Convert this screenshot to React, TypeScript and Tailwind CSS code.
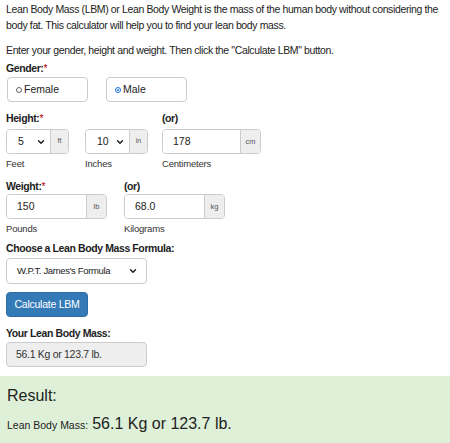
import { ChevronDown } from "lucide-react";

const FONT = "font-['Liberation_Sans',Arial,sans-serif]";

function Label({ children, star }: { children: React.ReactNode; star?: boolean }) {
  return (
    <div className="h-4 whitespace-nowrap text-[10.5px] font-bold leading-4 tracking-[-0.4px] text-[#222]">
      {children}
      {star && <span className="font-normal text-[#b00]">*</span>}
    </div>
  );
}

function Hint({ children }: { children: React.ReactNode }) {
  return <div className="mt-[2px] h-4 text-[9.5px] leading-4 tracking-[-0.2px] text-[#333]">{children}</div>;
}

function SelectAddon({ value, unit }: { value: string; unit: string }) {
  return (
    <div className="flex h-[25px] w-[63px] overflow-hidden rounded-[4px] border border-[#ccc]">
      <div className="flex flex-1 items-center justify-between bg-white pl-[11px] pr-[4px] text-[10.5px] text-[#222]">
        <span>{value}</span>
        <ChevronDown className="h-[10px] w-[10px]" strokeWidth={3.5} />
      </div>
      <div className="flex w-[18px] items-center justify-center border-l border-[#ccc] bg-[#eee] text-[7px] text-[#555]">
        {unit}
      </div>
    </div>
  );
}

function InputAddon({ value, unit, w }: { value: string; unit: string; w: string }) {
  return (
    <div className={`flex h-[25px] ${w} overflow-hidden rounded-[4px] border border-[#ccc]`}>
      <div className="flex flex-1 items-center bg-white pl-[10px] text-[10.5px] text-[#222]">{value}</div>
      <div className="flex w-[20px] items-center justify-center border-l border-[#ccc] bg-[#eee] text-[7.5px] text-[#555]">
        {unit}
      </div>
    </div>
  );
}

export default function App() {
  return (
    <div className={`${FONT} h-[443px] w-[450px] overflow-hidden bg-white text-[10.5px] tracking-[-0.37px] text-[#222]`}>
      <div className="pl-[6px] pr-[2px] pt-[1px]">
        <p className="leading-4">
          Lean Body Mass (LBM) or Lean Body Weight is the mass of the human body without considering the body fat. This
          calculator will help you to find your lean body mass.
        </p>
        <p className="mt-[9px] leading-4">Enter your gender, height and weight. Then click the "Calculate LBM" button.</p>

        <div className="mt-[2px]">
          <Label star>Gender:</Label>
          <div className="mt-[1px] flex gap-[18px] pl-[1px] tracking-normal">
            <div className="flex h-[25px] w-[81px] items-center gap-[2px] rounded-[4px] border border-[#ccc] pl-[8px] text-[10.5px]">
              <span className="h-[6px] w-[6px] rounded-full border border-[#666]" />
              Female
            </div>
            <div className="flex h-[25px] w-[81px] items-center gap-[2px] rounded-[4px] border border-[#ccc] pl-[8px] text-[10.5px]">
              <span className="flex h-[6px] w-[6px] items-center justify-center rounded-full border border-[#1a73e8]">
                <span className="h-[2px] w-[2px] rounded-full bg-[#1a73e8]" />
              </span>
              Male
            </div>
          </div>
        </div>

        <div className="mt-[8px] flex tracking-normal">
          <div className="w-[79px]">
            <Label star>Height:</Label>
            <div className="mt-[3px]">
              <SelectAddon value="5" unit="ft" />
            </div>
            <Hint>Feet</Hint>
          </div>
          <div className="w-[77px]">
            <div className="h-4" />
            <div className="mt-[3px]">
              <SelectAddon value="10" unit="in" />
            </div>
            <Hint>Inches</Hint>
          </div>
          <div>
            <Label>(or)</Label>
            <div className="mt-[3px]">
              <InputAddon value="178" unit="cm" w="w-[99px]" />
            </div>
            <Hint>Centimeters</Hint>
          </div>
        </div>

        <div className="mt-[6px] flex tracking-normal">
          <div className="w-[118px]">
            <Label star>Weight:</Label>
            <InputAddon value="150" unit="lb" w="w-[101px]" />
            <Hint>Pounds</Hint>
          </div>
          <div>
            <Label>(or)</Label>
            <InputAddon value="68.0" unit="kg" w="w-[101px]" />
            <Hint>Kilograms</Hint>
          </div>
        </div>

        <div className="mt-[3px]">
          <Label>Choose a Lean Body Mass Formula:</Label>
          <div className="mt-[2px] flex h-[26px] w-[141px] items-center justify-between whitespace-nowrap rounded-[4px] border border-[#ccc] pl-[10px] pr-[8px] text-[9.5px] tracking-[-0.35px]">
            <span>W.P.T. James's Formula</span>
            <ChevronDown className="h-[10px] w-[10px]" strokeWidth={3.5} />
          </div>
        </div>

        <button className="mt-[8px] flex h-[25px] w-[82px] items-center justify-center whitespace-nowrap rounded-[4px] border border-[#2e6da4] bg-[#337ab7] text-[10.5px] tracking-[-0.25px] text-white">
          Calculate LBM
        </button>

        <div className="mt-[8px]">
          <Label>Your Lean Body Mass:</Label>
          <div className="mt-[1px] flex h-[25px] w-[141px] items-center rounded-[4px] border border-[#ccc] bg-[#eee] pl-[9px] text-[10.5px] tracking-[-0.3px] text-[#333]">
            56.1 Kg or 123.7 lb.
          </div>
        </div>
      </div>

      <div className="mt-[9px] h-[80px] bg-[#dff0d8] px-[7px] pt-[10px] tracking-normal text-[#222]">
        <div className="text-[16px] leading-5">Result:</div>
        <div className="mt-[6px] flex items-baseline gap-[4px]">
          <span className="text-[10.5px]">Lean Body Mass:</span>
          <span className="text-[16px]">56.1 Kg or 123.7 lb.</span>
        </div>
      </div>
    </div>
  );
}
